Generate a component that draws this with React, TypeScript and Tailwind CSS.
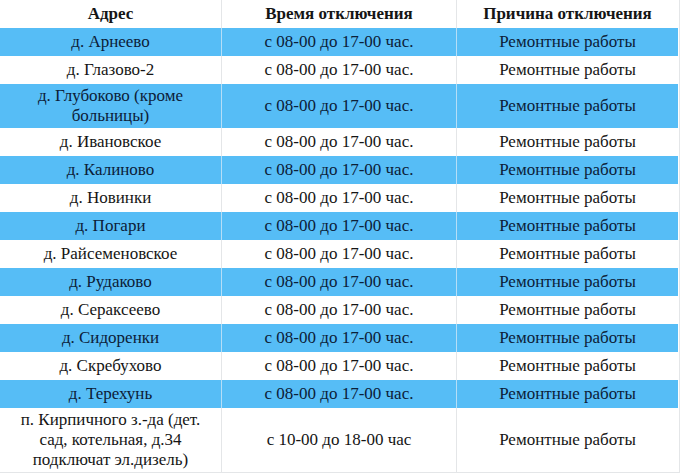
const rows: { addr: string[]; time: string }[] = [
  { addr: ['д. Арнеево'], time: 'с 08-00 до 17-00 час.' },
  { addr: ['д. Глазово-2'], time: 'с 08-00 до 17-00 час.' },
  { addr: ['д. Глубоково (кроме', 'больницы)'], time: 'с 08-00 до 17-00 час.' },
  { addr: ['д. Ивановское'], time: 'с 08-00 до 17-00 час.' },
  { addr: ['д. Калиново'], time: 'с 08-00 до 17-00 час.' },
  { addr: ['д. Новинки'], time: 'с 08-00 до 17-00 час.' },
  { addr: ['д. Погари'], time: 'с 08-00 до 17-00 час.' },
  { addr: ['д. Райсеменовское'], time: 'с 08-00 до 17-00 час.' },
  { addr: ['д. Рудаково'], time: 'с 08-00 до 17-00 час.' },
  { addr: ['д. Сераксеево'], time: 'с 08-00 до 17-00 час.' },
  { addr: ['д. Сидоренки'], time: 'с 08-00 до 17-00 час.' },
  { addr: ['д. Скребухово'], time: 'с 08-00 до 17-00 час.' },
  { addr: ['д. Терехунь'], time: 'с 08-00 до 17-00 час.' },
  {
    addr: ['п. Кирпичного з.-да (дет.', 'сад, котельная, д.34', 'подключат эл.дизель)'],
    time: 'с 10-00 до 18-00 час',
  },
];

const cell =
  "min-h-[28px] py-[2px] flex flex-col items-center justify-center text-center leading-[20px] font-['Liberation_Serif']";

export default function App() {
  return (
    <div className="w-[680px] h-[474px] overflow-hidden bg-white text-[17px] text-[#151515] font-['Liberation_Serif']">
      <div className="grid grid-cols-[222px_235px_221px] border-r border-[#e4e6e8] border-b">
        <div className={`${cell} font-bold border-r border-[#e4e6e8]`}>Адрес</div>
        <div className={`${cell} font-bold border-r border-[#e4e6e8]`}>Время отключения</div>
        <div className={`${cell} font-bold`}>Причина отключения</div>
        {rows.map((r, i) => {
          const blue = i % 2 === 0;
          const bg = blue ? 'bg-[#56bdf6] text-[#0c2038]' : 'bg-white';
          const line = blue ? 'border-[#b5def7]' : 'border-[#e4e6e8]';
          return [
            <div key={`a${i}`} className={`${cell} ${bg} border-r ${line}`}>
              {r.addr.map((t) => (
                <span key={t}>{t}</span>
              ))}
            </div>,
            <div key={`b${i}`} className={`${cell} ${bg} border-r ${line}`}>
              {r.time}
            </div>,
            <div key={`c${i}`} className={`${cell} ${bg}`}>
              Ремонтные работы
            </div>,
          ];
        })}
      </div>
    </div>
  );
}
